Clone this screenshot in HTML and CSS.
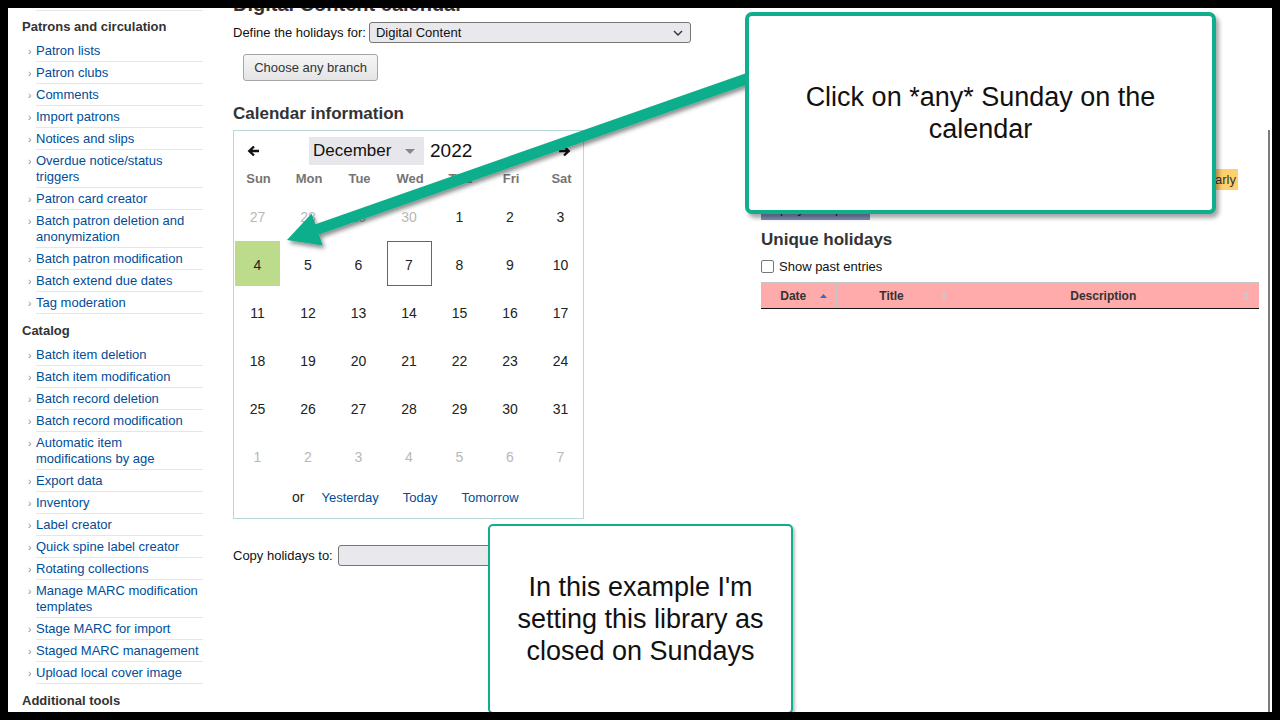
FILE: index.html
```html
<!DOCTYPE html>
<html lang="en">
<head>
<meta charset="utf-8">
<title>Digital Content calendar</title>
<link rel="stylesheet" href="styles.css">
</head>
<body>
<div class="page">
  <aside class="sidebar">
    <div class="sep"></div>
    <h5 class="nav-head first">Patrons and circulation</h5>
    <ul class="nav">
      <li><a>Patron lists</a></li>
      <li><a>Patron clubs</a></li>
      <li><a>Comments</a></li>
      <li><a>Import patrons</a></li>
      <li><a>Notices and slips</a></li>
      <li><a>Overdue notice/status triggers</a></li>
      <li><a>Patron card creator</a></li>
      <li><a>Batch patron deletion and anonymization</a></li>
      <li><a>Batch patron modification</a></li>
      <li><a>Batch extend due dates</a></li>
      <li><a>Tag moderation</a></li>
    </ul>
    <h5 class="nav-head">Catalog</h5>
    <ul class="nav">
      <li><a>Batch item deletion</a></li>
      <li><a>Batch item modification</a></li>
      <li><a>Batch record deletion</a></li>
      <li><a>Batch record modification</a></li>
      <li><a>Automatic item modifications by age</a></li>
      <li><a>Export data</a></li>
      <li><a>Inventory</a></li>
      <li><a>Label creator</a></li>
      <li><a>Quick spine label creator</a></li>
      <li><a>Rotating collections</a></li>
      <li><a>Manage MARC modification templates</a></li>
      <li><a>Stage MARC for import</a></li>
      <li><a>Staged MARC management</a></li>
      <li><a>Upload local cover image</a></li>
    </ul>
    <h5 class="nav-head">Additional tools</h5>
  </aside>

  <main class="main">
    <section class="col-left">
      <h1 class="title">Digital Content calendar</h1>
      <div class="field-row">
        <label class="label">Define the holidays for:</label>
        <span class="select wide">
          <span>Digital Content</span>
          <svg width="10" height="6" viewBox="0 0 10 6"><path d="M1 1l4 4 4-4" fill="none" stroke="#333" stroke-width="1.4"/></svg>
        </span>
      </div>
      <button class="btn-branch" type="button">Choose any branch</button>

      <h3 class="section-title">Calendar information</h3>
      <div class="calendar">
        <div class="cal-head">
          <span class="cal-nav">
            <svg width="13" height="12" viewBox="0 0 13 12"><path d="M12 6H2.5M7 1.5L2.3 6 7 10.5" fill="none" stroke="#111" stroke-width="2.4"/></svg>
          </span>
          <span class="month-select">
            <span>December</span>
            <svg width="10" height="5" viewBox="0 0 10 5"><path d="M0 0h10L5 5z" fill="#888"/></svg>
          </span>
          <span class="year">2022</span>
          <span class="cal-nav right">
            <svg width="13" height="12" viewBox="0 0 13 12"><path d="M1 6h9.5M6 1.5L10.7 6 6 10.5" fill="none" stroke="#111" stroke-width="2.4"/></svg>
          </span>
        </div>
        <div class="cal-grid weekdays">
          <span>Sun</span><span>Mon</span><span>Tue</span><span>Wed</span><span>Thu</span><span>Fri</span><span>Sat</span>
        </div>
        <div class="cal-grid days">
          <span class="day muted">27</span><span class="day muted">28</span><span class="day muted">29</span><span class="day muted">30</span><span class="day">1</span><span class="day">2</span><span class="day">3</span>
          <span class="day selected">4</span><span class="day">5</span><span class="day">6</span><span class="day today">7</span><span class="day">8</span><span class="day">9</span><span class="day">10</span>
          <span class="day">11</span><span class="day">12</span><span class="day">13</span><span class="day">14</span><span class="day">15</span><span class="day">16</span><span class="day">17</span>
          <span class="day">18</span><span class="day">19</span><span class="day">20</span><span class="day">21</span><span class="day">22</span><span class="day">23</span><span class="day">24</span>
          <span class="day">25</span><span class="day">26</span><span class="day">27</span><span class="day">28</span><span class="day">29</span><span class="day">30</span><span class="day">31</span>
          <span class="day muted">1</span><span class="day muted">2</span><span class="day muted">3</span><span class="day muted">4</span><span class="day muted">5</span><span class="day muted">6</span><span class="day muted">7</span>
        </div>
        <div class="cal-foot">
          <span class="or">or</span>
          <a>Yesterday</a>
          <a>Today</a>
          <a>Tomorrow</a>
        </div>
      </div>

      <div class="field-row copy-row">
        <label class="label">Copy holidays to:</label>
        <span class="select copy"></span>
      </div>
    </section>

    <section class="col-right">
      <div class="legend">
        <span class="badge weekly">Holiday repeating weekly</span>
        <span class="badge yearly">Holiday repeating yearly</span>
      </div>
      <button class="btn-blue" type="button">Display exceptions</button>
      <h3 class="section-title unique">Unique holidays</h3>
      <div class="check-row">
        <span class="checkbox"></span>
        <span>Show past entries</span>
      </div>
      <table class="holidays">
        <thead>
          <tr>
            <th class="c-date">Date
              <svg class="sort" width="7" height="4" viewBox="0 0 7 4"><path d="M0 4L3.5 0 7 4z" fill="#2a6fd6"/></svg>
            </th>
            <th class="c-title">Title
              <svg class="sort" width="6" height="10" viewBox="0 0 6 10"><path d="M0 4L3 0.5 6 4zM0 6l3 3.5L6 6z" fill="#c9c9c9"/></svg>
            </th>
            <th class="c-desc">Description
              <svg class="sort" width="6" height="10" viewBox="0 0 6 10"><path d="M0 4L3 0.5 6 4zM0 6l3 3.5L6 6z" fill="#c9c9c9"/></svg>
            </th>
          </tr>
        </thead>
      </table>
    </section>
  </main>

  <div class="scroll-edge"></div>

  <svg class="arrow" width="1280" height="720" viewBox="0 0 1280 720">
    <defs>
      <filter id="shadow" x="-10%" y="-10%" width="130%" height="140%">
        <feDropShadow dx="2" dy="3" stdDeviation="2" flood-color="#000" flood-opacity="0.45"/>
      </filter>
    </defs>
    <polygon points="287,240 322.8,245.4 319,234.6 753.8,82.2 750.2,71.8 315.4,224.2 311.6,213.4" fill="#10ae8c" filter="url(#shadow)"/>
  </svg>

  <div class="callout callout-top">
    <p>Click on *any* Sunday on the calendar</p>
  </div>
  <div class="callout callout-bottom">
    <p>In this example I'm setting this library as closed on Sundays</p>
  </div>
</div>
</body>
</html>
```

FILE: styles.css
```css
html, body {
  margin: 0;
  height: 100%;
}

body {
  background: #000;
  padding: 8px;
  box-sizing: border-box;
  overflow: hidden;
  font-family: "Liberation Sans", Arial, sans-serif;
  color: #111;
}

.page {
  position: relative;
  width: 1264px;
  height: 704px;
  background: #fff;
  overflow: hidden;
  display: flex;
  align-items: flex-start;
}

/* ---------- sidebar ---------- */
.sidebar {
  flex: none;
  width: 181px;
  padding-left: 14px;
}

.sep {
  margin: 2px 0 0 14px;
  border-top: 1px solid #e6e6e6;
}

.nav-head {
  margin: 8px 0 4px;
  font-size: 13px;
  line-height: 18px;
  font-weight: bold;
  color: #333;
}

.nav-head.first {
  margin-top: 7px;
}

.nav {
  margin: 0;
  padding: 0 0 0 14px;
  list-style: none;
}

.nav li {
  position: relative;
  width: 164px;
  padding: 3px 3px 2px 0;
  font-size: 13px;
  line-height: 16px;
  border-bottom: 1px solid #e6e6e6;
}

.nav li::before {
  content: "\203A";
  position: absolute;
  left: -8px;
  top: 4px;
  font-size: 10px;
  color: #888;
}

.nav a {
  color: #004d99;
}

/* ---------- main ---------- */
.main {
  flex: none;
  display: flex;
  gap: 68px;
  margin-left: 30px;
}

.col-left {
  width: 460px;
}

.col-right {
  width: 498px;
}

.title {
  margin: -16px 0 0;
  font-size: 20px;
  line-height: 24px;
  font-weight: bold;
  color: #333;
}

.field-row {
  display: flex;
  align-items: center;
  gap: 3px;
  margin-top: 6px;
  font-size: 13px;
}

.label {
  color: #111;
}

.select {
  display: inline-flex;
  align-items: center;
  justify-content: space-between;
  box-sizing: border-box;
  height: 21px;
  padding: 0 7px 0 6px;
  border: 1px solid #767676;
  border-radius: 3px;
  background: #e9e9ed;
  font-size: 13px;
  color: #111;
}

.select.wide {
  width: 322px;
}

.select.copy {
  width: 320px;
}

.btn-branch {
  display: block;
  margin: 11px 0 0 10px;
  width: 135px;
  height: 27px;
  padding: 0;
  border: 1px solid #a6a6a6;
  border-radius: 3px;
  background: linear-gradient(#f6f6f6, #e4e4e4);
  font-family: "Liberation Sans", Arial, sans-serif;
  font-size: 13px;
  color: #333;
}

.section-title {
  margin: 23px 0 0;
  font-size: 17px;
  line-height: 20px;
  font-weight: bold;
  color: #333;
}

/* ---------- calendar ---------- */
.calendar {
  margin-top: 6px;
  width: 351px;
  box-sizing: border-box;
  border: 1px solid #b9d8d9;
  padding: 6px 0 12px;
}

.cal-head {
  display: flex;
  align-items: center;
  height: 28px;
  padding: 0 7px;
}

.cal-nav {
  display: flex;
  align-items: center;
  justify-content: center;
  width: 24px;
  height: 28px;
}

.cal-nav.right {
  margin-left: auto;
}

.month-select {
  display: flex;
  align-items: center;
  justify-content: space-between;
  box-sizing: border-box;
  width: 115px;
  height: 28px;
  margin-left: 44px;
  padding: 0 9px 0 4px;
  background: #e7e7eb;
  font-size: 17px;
  color: #111;
}

.year {
  margin-left: 6px;
  font-size: 19px;
  color: #111;
}

.cal-grid {
  display: grid;
  grid-template-columns: repeat(7, 45px);
  column-gap: 5.5px;
  padding-left: 1px;
}

.weekdays {
  margin-top: 6px;
  height: 16px;
  line-height: 16px;
  padding-left: 2px;
  font-size: 13px;
  font-weight: bold;
  color: #757575;
  text-align: center;
}

.days {
  margin-top: 6px;
  row-gap: 3px;
}

.day {
  box-sizing: border-box;
  height: 45px;
  padding-top: 2px;
  display: flex;
  align-items: center;
  justify-content: center;
  font-size: 14px;
  color: #222;
}

.day.muted {
  color: #b8b8b8;
}

.day.selected {
  background: #bcdc8b;
}

.day.today {
  border: 1px solid #5b7a22;
}

.cal-foot {
  display: flex;
  align-items: center;
  gap: 24px;
  margin-top: 10px;
  height: 18px;
  padding-left: 58px;
  font-size: 13px;
}

.cal-foot .or {
  font-size: 14px;
  color: #222;
  margin-right: -7px;
}

.cal-foot a {
  color: #004d99;
}

.copy-row {
  margin-top: 26px;
  gap: 5px;
}

/* ---------- right column ---------- */
.legend {
  display: flex;
  justify-content: flex-end;
  gap: 6px;
  margin-top: 161px;
  height: 21px;
  padding-right: 21px;
}

.badge {
  display: flex;
  align-items: center;
  padding: 0 2px 0 4px;
  font-size: 13px;
  color: #333;
}

.badge.weekly {
  background: #ffaaaa;
}

.badge.yearly {
  background: #ffd16b;
}

.btn-blue {
  display: block;
  margin-top: 7px;
  width: 109px;
  height: 23px;
  padding: 0;
  border: 0;
  background: #7f92ba;
  font-family: "Liberation Sans", Arial, sans-serif;
  font-size: 13px;
  color: #222;
}

.section-title.unique {
  margin-top: 10px;
}

.check-row {
  display: flex;
  align-items: center;
  gap: 5px;
  margin-top: 8px;
  height: 16px;
  font-size: 13px;
  color: #111;
}

.checkbox {
  width: 13px;
  height: 13px;
  box-sizing: border-box;
  border: 1px solid #767676;
  border-radius: 2px;
  background: #fff;
}

.holidays {
  margin-top: 8px;
  width: 498px;
  border-collapse: collapse;
  table-layout: fixed;
}

.holidays th {
  position: relative;
  box-sizing: border-box;
  padding: 5px 20px 4px 10px;
  line-height: 16px;
  font-size: 12px;
  font-weight: bold;
  color: #333;
  background: #ffabab;
  border-top: 1px solid #c6c6c6;
  border-left: 1px solid #c6c6c6;
  border-bottom: 1px solid #111;
  text-align: center;
}

.holidays th:first-child {
  border-left: 0;
}

.c-date { width: 75px; }
.c-title { width: 121px; }
.c-desc { width: 302px; }

.sort {
  position: absolute;
  right: 10px;
  top: 50%;
  transform: translateY(-50%);
}

.c-date .sort {
  right: 9px;
}

/* ---------- overlays ---------- */
.scroll-edge {
  position: absolute;
  left: 1260px;
  top: 122px;
  width: 2px;
  height: 600px;
  background: #7c7c7c;
}

.arrow {
  position: absolute;
  left: -8px;
  top: -8px;
  pointer-events: none;
}

.callout {
  position: absolute;
  box-sizing: border-box;
  display: flex;
  align-items: center;
  justify-content: center;
  background: #fff;
  border-style: solid;
  border-color: #10ae8c;
  text-align: center;
}

.callout p {
  margin: 0;
  font-size: 27px;
  line-height: 32px;
  color: #111;
}

.callout-top {
  left: 737px;
  top: 4px;
  width: 471px;
  height: 202px;
  border-width: 4px;
  border-radius: 7px;
  padding: 0 40px;
  box-shadow: 3px 4px 4px rgba(0, 0, 0, 0.35);
}

.callout-bottom {
  left: 480px;
  top: 516px;
  width: 305px;
  height: 190px;
  border-width: 2px;
  border-radius: 5px;
  padding: 0 10px;
  box-shadow: 2px 2px 3px rgba(0, 0, 0, 0.25);
}
```
